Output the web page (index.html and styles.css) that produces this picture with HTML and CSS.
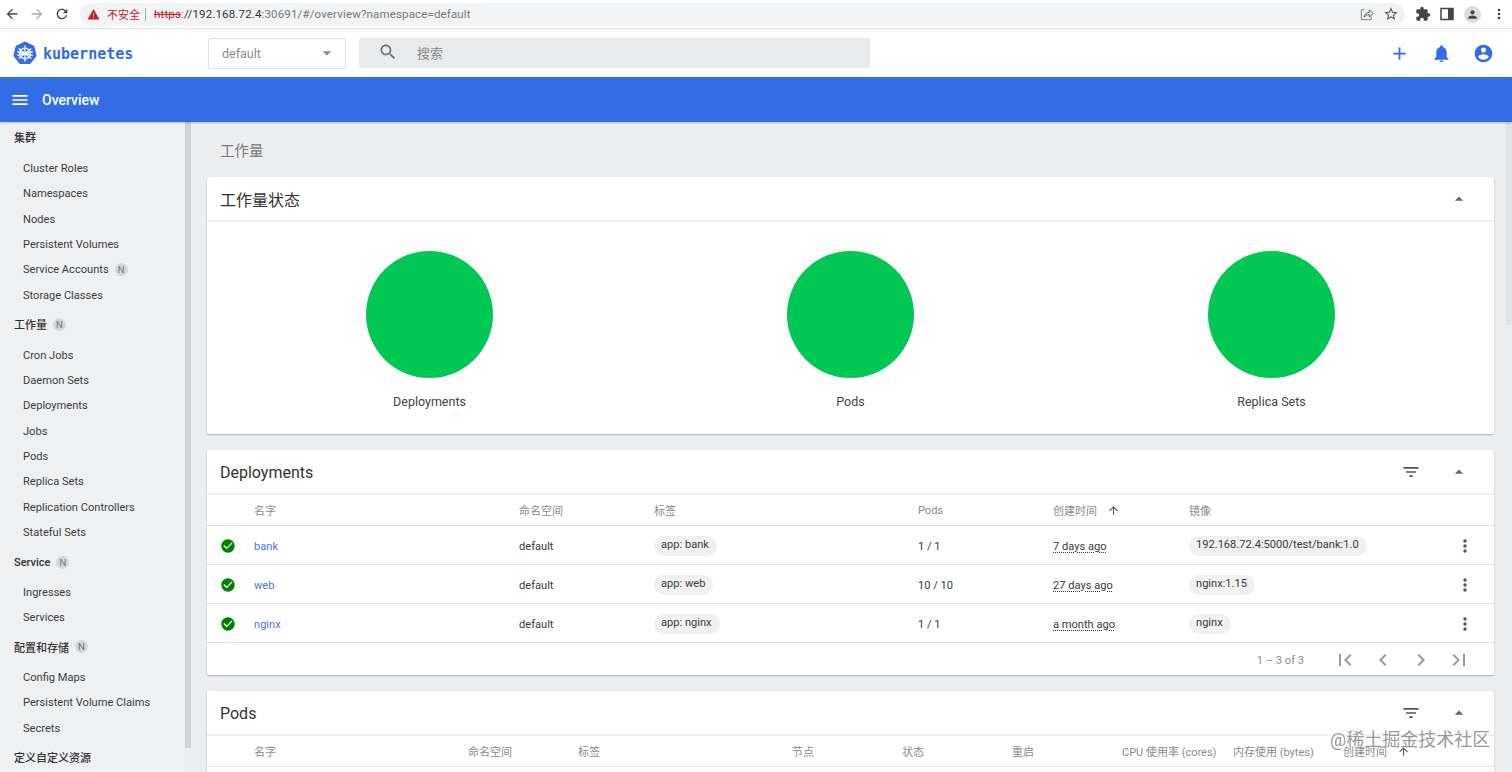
FILE: index.html
```html
<!DOCTYPE html>
<html lang="en">
<head>
    <meta charset="UTF-8">
    <meta name="viewport" content="width=device-width, initial-scale=1.0">
    <title>Overview - Kubernetes Dashboard</title>
    <link rel="stylesheet" href="styles.css">
</head>
<body>
    <svg class="sprite" width="0" height="0">
        <symbol id="i-back" viewBox="0 0 24 24"><path d="M20 11H7.83l5.59-5.59L12 4l-8 8 8 8 1.41-1.41L7.83 13H20v-2z"/></symbol>
        <symbol id="i-forward" viewBox="0 0 24 24"><path d="M12 4l-1.41 1.41L16.17 11H4v2h12.17l-5.58 5.59L12 20l8-8z"/></symbol>
        <symbol id="i-refresh" viewBox="0 0 24 24"><path d="M17.65 6.35C16.2 4.9 14.21 4 12 4c-4.42 0-7.99 3.58-7.99 8s3.57 8 7.99 8c3.73 0 6.84-2.55 7.73-6h-2.08c-.82 2.33-3.04 4-5.65 4-3.31 0-6-2.69-6-6s2.69-6 6-6c1.66 0 3.14.69 4.22 1.78L13 11h7V4l-2.35 2.35z"/></symbol>
        <symbol id="i-warning" viewBox="0 0 24 24"><path d="M1 21h22L12 2 1 21zm12-3h-2v-2h2v2zm0-4h-2v-4h2v4z"/></symbol>
        <symbol id="i-search" viewBox="0 0 24 24"><path d="M15.5 14h-.79l-.28-.27C15.41 12.59 16 11.11 16 9.5 16 5.91 13.09 3 9.5 3S3 5.91 3 9.5 5.91 16 9.5 16c1.61 0 3.09-.59 4.23-1.57l.27.28v.79l5 4.99L20.49 19l-4.99-5zm-6 0C7.01 14 5 11.99 5 9.5S7.01 5 9.5 5 14 7.01 14 9.5 11.99 14 9.5 14z"/></symbol>
        <symbol id="i-add" viewBox="0 0 24 24"><path d="M19 13h-6v6h-2v-6H5v-2h6V5h2v6h6v2z"/></symbol>
        <symbol id="i-bell" viewBox="0 0 24 24"><path d="M12 22c1.1 0 2-.9 2-2h-4c0 1.1.89 2 2 2zm6-6v-5c0-3.07-1.64-5.64-4.5-6.32V4c0-.83-.67-1.5-1.5-1.5s-1.5.67-1.5 1.5v.68C7.63 5.36 6 7.92 6 11v5l-2 2v1h16v-1l-2-2z"/></symbol>
        <symbol id="i-account" viewBox="0 0 24 24"><path d="M12 2C6.48 2 2 6.48 2 12s4.48 10 10 10 10-4.48 10-10S17.52 2 12 2zm0 3c1.66 0 3 1.34 3 3s-1.34 3-3 3-3-1.34-3-3 1.34-3 3-3zm0 14.2c-2.5 0-4.71-1.28-6-3.22.03-1.99 4-3.08 6-3.08 1.99 0 5.97 1.09 6 3.08-1.29 1.94-3.5 3.22-6 3.22z"/></symbol>
        <symbol id="i-menu" viewBox="0 0 24 24"><path d="M3 18h18v-2H3v2zm0-5h18v-2H3v2zm0-7v2h18V6H3z"/></symbol>
        <symbol id="i-filter" viewBox="0 0 24 24"><path d="M10 18h4v-2h-4v2zM3 6v2h18V6H3zm3 7h12v-2H6v2z"/></symbol>
        <symbol id="i-more" viewBox="0 0 24 24"><path d="M12 8c1.1 0 2-.9 2-2s-.9-2-2-2-2 .9-2 2 .9 2 2 2zm0 2c-1.1 0-2 .9-2 2s.9 2 2 2 2-.9 2-2-.9-2-2-2zm0 6c-1.1 0-2 .9-2 2s.9 2 2 2 2-.9 2-2-.9-2-2-2z"/></symbol>
        <symbol id="i-drop-up" viewBox="0 0 24 24"><path d="M7 14l5-5 5 5z"/></symbol>
        <symbol id="i-drop-down" viewBox="0 0 24 24"><path d="M7 10l5 5 5-5z"/></symbol>
        <symbol id="i-up" viewBox="0 0 24 24"><path d="M4 12l1.41 1.41L11 7.83V20h2V7.83l5.58 5.59L20 12l-8-8-8 8z"/></symbol>
        <symbol id="i-ok" viewBox="0 0 24 24"><path d="M12 2C6.48 2 2 6.48 2 12s4.48 10 10 10 10-4.48 10-10S17.52 2 12 2zm-2 15l-5-5 1.41-1.41L10 14.17l7.59-7.59L19 8l-9 9z"/></symbol>
        <symbol id="i-first" viewBox="0 0 24 24"><path d="M18.41 16.59L13.82 12l4.59-4.59L17 6l-6 6 6 6zM6 6h2v12H6z"/></symbol>
        <symbol id="i-last" viewBox="0 0 24 24"><path d="M5.59 7.41L10.18 12l-4.59 4.59L7 18l6-6-6-6zM16 6h2v12h-2z"/></symbol>
        <symbol id="i-prev" viewBox="0 0 24 24"><path d="M15.41 7.41L14 6l-6 6 6 6 1.41-1.41L10.83 12z"/></symbol>
        <symbol id="i-next" viewBox="0 0 24 24"><path d="M10 6L8.59 7.41 13.17 12l-4.58 4.59L10 18l6-6z"/></symbol>
        <symbol id="i-ext" viewBox="0 0 24 24"><path d="M20.5 11H19V7c0-1.1-.9-2-2-2h-4V3.5C13 2.12 11.88 1 10.5 1S8 2.12 8 3.5V5H4c-1.1 0-1.99.9-1.99 2v3.8H3.5c1.49 0 2.7 1.21 2.7 2.7s-1.21 2.7-2.7 2.7H2V20c0 1.1.9 2 2 2h3.8v-1.5c0-1.49 1.21-2.7 2.7-2.7 1.49 0 2.7 1.21 2.7 2.7V22H17c1.1 0 2-.9 2-2v-4h1.5c1.38 0 2.5-1.12 2.5-2.5S21.88 11 20.5 11z"/></symbol>
        <symbol id="i-star" viewBox="0 0 24 24"><path d="M22 9.24l-7.19-.62L12 2 9.19 8.63 2 9.24l5.46 4.73L5.82 21 12 17.27 18.18 21l-1.63-7.03L22 9.24zM12 15.4l-3.76 2.27 1-4.28-3.32-2.88 4.38-.38L12 6.1l1.71 4.04 4.38.38-3.32 2.88 1 4.28L12 15.4z"/></symbol>
        <symbol id="i-person" viewBox="0 0 24 24"><path d="M12 12c2.21 0 4-1.79 4-4s-1.79-4-4-4-4 1.79-4 4 1.79 4 4 4zm0 2c-2.67 0-8 1.34-8 4v2h16v-2c0-2.66-5.33-4-8-4z"/></symbol>
    </svg>

    <!-- browser chrome -->
    <div class="browser">
        <svg class="b-icon"><use href="#i-back"/></svg>
        <svg class="b-icon faded"><use href="#i-forward"/></svg>
        <svg class="b-icon"><use href="#i-refresh"/></svg>
        <div class="address">
            <svg class="warn"><use href="#i-warning"/></svg>
            <span class="insecure">不安全</span>
            <span class="sep"></span>
            <span class="url"><s>https</s><span class="url-dim">:</span>//192.168.72.4<span class="url-dim">:30691/#/overview?namespace=default</span></span>
            <span class="spacer"></span>
            <svg class="share" viewBox="0 0 16 16"><path d="M6 3H2.5v10.5H13V10" fill="none" stroke="#777" stroke-width="1"/><path d="M5.5 11c.3-3.5 2.5-5.3 5.5-5.3V3l4 4-4 3.6V8.2c-2.300 0-4 .8-5.500 2.800z" fill="none" stroke="#555" stroke-width="1"/></svg>
            <svg class="b-icon star"><use href="#i-star"/></svg>
        </div>
        <svg class="b-icon ext"><use href="#i-ext"/></svg>
        <svg class="panel" viewBox="0 0 14 14"><rect x="1" y="1.500" width="12" height="11" fill="none" stroke="#444" stroke-width="1.500"/><rect x="8" y="1.500" width="5" height="11" fill="#444"/></svg>
        <span class="avatar"><svg><use href="#i-person"/></svg></span>
        <svg class="b-icon dots"><use href="#i-more"/></svg>
    </div>

    <!-- dashboard toolbar -->
    <header class="toolbar">
        <div class="brand">
            <svg class="logo" viewBox="0 0 24 24">
                <path d="M12 .5 21.300 5l2.300 10-6.400 8H6.800L.4 15 2.700 5z" fill="#326de6"/>
                <g fill="none" stroke="#fff" stroke-width="1.300">
                    <circle cx="12" cy="12.500" r="5.400"/>
                    <path d="M12 4.500v16M5.700 7.500l12.600 10M18.300 7.500 5.700 17.500M4.200 14.300l15.600-3.600M19.800 14.300 4.200 10.700"/>
                </g>
            </svg>
            <span class="brand-name">kubernetes</span>
        </div>
        <div class="ns-select">
            <span>default</span>
            <svg><use href="#i-drop-down"/></svg>
        </div>
        <div class="search">
            <svg><use href="#i-search"/></svg>
            <span>搜索</span>
        </div>
        <div class="actions">
            <svg><use href="#i-add"/></svg>
            <svg><use href="#i-bell"/></svg>
            <svg><use href="#i-account"/></svg>
        </div>
    </header>

    <div class="titlebar">
        <svg><use href="#i-menu"/></svg>
        <span>Overview</span>
    </div>

    <div class="layout">
        <nav class="sidenav">
            <div class="nav-head">集群</div>
            <a class="nav-item">Cluster Roles</a>
            <a class="nav-item">Namespaces</a>
            <a class="nav-item">Nodes</a>
            <a class="nav-item">Persistent Volumes</a>
            <a class="nav-item">Service Accounts <span class="badge">N</span></a>
            <a class="nav-item">Storage Classes</a>
            <div class="nav-head">工作量 <span class="badge">N</span></div>
            <a class="nav-item">Cron Jobs</a>
            <a class="nav-item">Daemon Sets</a>
            <a class="nav-item">Deployments</a>
            <a class="nav-item">Jobs</a>
            <a class="nav-item">Pods</a>
            <a class="nav-item">Replica Sets</a>
            <a class="nav-item">Replication Controllers</a>
            <a class="nav-item">Stateful Sets</a>
            <div class="nav-head nav-head-latin">Service <span class="badge">N</span></div>
            <a class="nav-item">Ingresses</a>
            <a class="nav-item">Services</a>
            <div class="nav-head">配置和存储 <span class="badge">N</span></div>
            <a class="nav-item">Config Maps</a>
            <a class="nav-item">Persistent Volume Claims</a>
            <a class="nav-item">Secrets</a>
            <div class="nav-head">定义自定义资源</div>
        </nav>
        <div class="nav-scroll"></div>

        <main class="content">
            <h1 class="page-title">工作量</h1>

            <section class="card">
                <div class="card-head">
                    <h2 class="cjk">工作量状态</h2>
                    <svg class="collapse"><use href="#i-drop-up"/></svg>
                </div>
                <div class="charts">
                    <div class="chart"><div class="circle"></div><span>Deployments</span></div>
                    <div class="chart"><div class="circle"></div><span>Pods</span></div>
                    <div class="chart"><div class="circle"></div><span>Replica Sets</span></div>
                </div>
            </section>

            <section class="card">
                <div class="card-head">
                    <h2>Deployments</h2>
                    <svg class="filter"><use href="#i-filter"/></svg>
                    <svg class="collapse"><use href="#i-drop-up"/></svg>
                </div>
                <div class="row row-head dep-cols">
                    <span></span><span>名字</span><span>命名空间</span><span>标签</span><span>Pods</span>
                    <span class="sorted">创建时间 <svg><use href="#i-up"/></svg></span><span>镜像</span><span></span>
                </div>
                <div class="row dep-cols">
                    <svg class="ok"><use href="#i-ok"/></svg><a class="link">bank</a><span>default</span><span><span class="chip">app: bank</span></span><span>1 / 1</span>
                    <span class="age">7 days ago</span><span><span class="chip">192.168.72.4:5000/test/bank:1.0</span></span><svg class="more"><use href="#i-more"/></svg>
                </div>
                <div class="row dep-cols">
                    <svg class="ok"><use href="#i-ok"/></svg><a class="link">web</a><span>default</span><span><span class="chip">app: web</span></span><span>10 / 10</span>
                    <span class="age">27 days ago</span><span><span class="chip">nginx:1.15</span></span><svg class="more"><use href="#i-more"/></svg>
                </div>
                <div class="row dep-cols">
                    <svg class="ok"><use href="#i-ok"/></svg><a class="link">nginx</a><span>default</span><span><span class="chip">app: nginx</span></span><span>1 / 1</span>
                    <span class="age">a month ago</span><span><span class="chip">nginx</span></span><svg class="more"><use href="#i-more"/></svg>
                </div>
                <div class="pager">
                    <span class="range">1 – 3 of 3</span>
                    <svg><use href="#i-first"/></svg>
                    <svg><use href="#i-prev"/></svg>
                    <svg><use href="#i-next"/></svg>
                    <svg><use href="#i-last"/></svg>
                </div>
            </section>

            <section class="card">
                <div class="card-head">
                    <h2>Pods</h2>
                    <svg class="filter"><use href="#i-filter"/></svg>
                    <svg class="collapse"><use href="#i-drop-up"/></svg>
                </div>
                <div class="row row-head pod-cols">
                    <span></span><span>名字</span><span>命名空间</span><span>标签</span><span>节点</span><span>状态</span><span>重启</span>
                    <span>CPU 使用率 (cores)</span><span>内存使用 (bytes)</span><span class="sorted">创建时间 <svg><use href="#i-up"/></svg></span>
                </div>
                <div class="row pod-cols"></div>
            </section>
        </main>
        <div class="page-scroll"></div>
    </div>

    <div class="watermark">@稀土掘金技术社区</div>
</body>
</html>
```

FILE: styles.css
```css
* { box-sizing: border-box; }
html, body { height: 100%; }
body { margin: 0; height: 772px; overflow: hidden; display: flex; flex-direction: column; position: relative; font-family: Roboto, "Noto Sans CJK SC", sans-serif; font-size: 11.100px; color: #3a3a3a; background-color: #edeef0; }
.sprite { position: absolute; }
h1, h2 { margin: 0; font-weight: 400; }

/* browser chrome */
.browser { height: 29px; flex: none; display: flex; align-items: center; background-color: #fff; border-bottom: 1px solid #e6e6e6; }
.b-icon { width: 16px; height: 16px; margin: 0 5px 0 4px; fill: #444; }
.b-icon.faded { fill: #aaa; }
.address { width: 1325px; height: 23px; margin-left: 5px; margin-right: 10px; padding: 0 0 0 6px; display: flex; align-items: center; background-color: #f1f3f4; border-radius: 12px; }
.warn { width: 13px; height: 13px; fill: #c5221f; margin-left: 1px; }
.insecure { color: #c5221f; font-size: 11px; margin-left: 7px; }
.sep { width: 1px; height: 13px; background-color: #aaa; margin: 0 8px 0 5px; }
.url { font-size: 11.500px; color: #333; letter-spacing: 0.150px; }
.url s { color: #c5221f; }
.url-dim { color: #777; }
.spacer { flex: 1; }
.share { width: 15px; height: 15px; margin-right: 9px; }
.star { margin: 0 6px 0 0; fill: #555; }
.ext { margin: 0 3px 0 0; }
.panel { width: 14px; height: 14px; margin: 0 10px 0 6px; }
.avatar { width: 17px; height: 17px; border-radius: 50%; background-color: #dcdcdc; display: flex; align-items: center; justify-content: center; }
.avatar svg { width: 13px; height: 13px; fill: #444; }
.dots { margin: 0 0 0 10px; }

/* toolbar */
.toolbar { height: 48px; flex: none; display: flex; align-items: center; background-color: #fff; padding-left: 13px; }
.brand { width: 195px; display: flex; align-items: center; }
.logo { width: 24px; height: 24px; }
.brand-name { margin-left: 6px; padding-top: 2px; color: #326de6; font-family: "DejaVu Sans Mono", monospace; font-size: 15px; font-weight: 700; }
.ns-select { width: 138px; height: 31px; margin-right: 13px; padding: 0 8px 0 13px; display: flex; align-items: center; justify-content: space-between; border: 1px solid #e2e2e2; border-radius: 2px; color: #8a8a8a; font-size: 12.500px; }
.ns-select svg { width: 20px; height: 20px; fill: #888; }
.search { width: 511px; height: 30px; padding: 0 0 2px 19px; display: flex; align-items: center; background-color: #e9eaeb; border-radius: 2px; color: #8a8a8a; font-size: 13px; }
.search svg { width: 20px; height: 20px; fill: #707070; margin-right: 19px; }
.actions { margin-left: auto; display: flex; gap: 21px; padding-right: 18px; }
.actions svg { width: 21px; height: 21px; fill: #326de6; }

/* blue title bar */
.titlebar { height: 45px; flex: none; display: flex; align-items: center; padding-left: 10px; background-color: #326de6; color: #fff; font-size: 14px; font-weight: 500; box-shadow: 0 1px 2px rgba(0, 0, 0, 0.25); z-index: 1; }
.titlebar svg { width: 20px; height: 20px; fill: #fff; margin-right: 12px; }

.layout { flex: 1; min-height: 0; display: flex; }

/* side nav */
.sidenav { width: 185px; flex: none; padding-top: 3.330px; background-color: #eff0f2; overflow: hidden; }
.nav-head { height: 25.330px; margin: 4.670px 0; padding: 0 0 1px 14px; display: flex; align-items: center; font-size: 11px; font-weight: 500; color: #333; }
.nav-head:first-child { margin-top: 0; }
.nav-head-latin { padding: 2px 0 0 14px; }
.nav-item { height: 25.330px; padding: 1px 0 0 23px; display: flex; align-items: center; color: #3c3c3c; }
.badge { width: 13px; height: 13px; margin-left: 6px; border-radius: 50%; background-color: #d5d6d7; color: #777; font-size: 9.500px; font-weight: 400; display: inline-flex; align-items: center; justify-content: center; }
.nav-scroll { width: 6px; height: 626px; flex: none; background-color: #d2d3d5; }

/* main column */
.content { flex: 1; min-width: 0; padding: 0 12px 0 16px; }
.page-title { height: 55px; padding: 19px 0 0 13px; font-size: 14.500px; line-height: 22px; color: #7a7a7a; }
.page-scroll { width: 6px; height: 203px; flex: none; background-color: #e3e4e6; }
.card { background-color: #fff; border-radius: 2px; margin-bottom: 16px; box-shadow: 0 1px 2px rgba(0, 0, 0, 0.28); }
.card-head { height: 45px; padding-left: 13px; display: flex; align-items: center; border-bottom: 2px solid #f0f0f0; }
.card-head h2 { flex: 1; padding-top: 2px; font-size: 16px; color: #333; }
.card-head h2.cjk { padding-top: 0; }
.card-head svg { width: 20px; height: 20px; fill: #666; }
.card-head .filter { margin-right: 28px; fill: #555; }
.card-head .collapse { margin-right: 25px; }

/* status charts */
.charts { height: 212px; padding: 29px 12px 0; display: grid; grid-template-columns: repeat(3, 1fr); }
.chart { display: flex; flex-direction: column; align-items: center; font-size: 12.500px; color: #444; }
.circle { width: 127px; height: 127px; margin-bottom: 16px; border-radius: 50%; background-color: #00c853; }

/* resource tables */
.row { height: 39px; padding: 2px 0 0 13px; display: grid; align-items: center; border-bottom: 1px solid #e4e4e4; }
.row-head { height: 31px; padding-top: 0; color: #8c8c8c; font-size: 11px; }
.dep-cols { grid-template-columns: 34px 265px 135px 264px 135px 136px 266px 24px; }
.pod-cols { grid-template-columns: 34px 214px 110px 214px 110px 110px 110px 111px 110px 120px; }
.sorted { display: flex; align-items: center; gap: 7px; white-space: nowrap; }
.sorted svg { width: 13px; height: 13px; fill: #555; margin-left: 3px; }
.ok { width: 16px; height: 16px; fill: #008000; }
.link { color: #4f74dc; }
.age { text-decoration: underline dotted; text-underline-offset: 2px; }
.chip { display: inline-block; height: 20px; line-height: 18px; padding: 0 8px 0 7px; border-radius: 10px; background-color: #f1f1f1; white-space: nowrap; }
.more { width: 20px; height: 20px; fill: #555; }
.pager { height: 32px; padding: 2px 23px 0 0; display: flex; align-items: center; justify-content: flex-end; gap: 14px; color: #8c8c8c; }
.pager svg { width: 24px; height: 24px; fill: #999; }
.range { margin-right: 15px; }

.watermark { position: absolute; left: 1330px; top: 728px; font-size: 18px; line-height: 24px; color: #999; text-shadow: 0 0 2px #fff; white-space: nowrap; }
```
